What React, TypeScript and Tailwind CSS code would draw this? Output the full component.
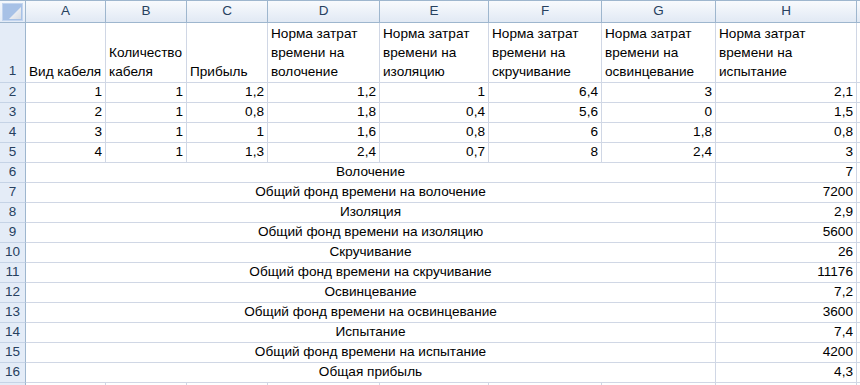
const cols = ["A", "B", "C", "D", "E", "F", "G", "H"];
const widths = ["w-[80px]", "w-[81px]", "w-[81px]", "w-[112px]", "w-[109px]", "w-[113px]", "w-[114px]", "w-[141px]"];

const headers = [
    "Вид кабеля",
    "Количество кабеля",
    "Прибыль",
    "Норма затрат времени на волочение",
    "Норма затрат времени на изоляцию",
    "Норма затрат времени на скручивание",
    "Норма затрат времени на освинцевание",
    "Норма затрат времени на испытание",
];

const data = [
    ["1", "1", "1,2", "1,2", "1", "6,4", "3", "2,1"],
    ["2", "1", "0,8", "1,8", "0,4", "5,6", "0", "1,5"],
    ["3", "1", "1", "1,6", "0,8", "6", "1,8", "0,8"],
    ["4", "1", "1,3", "2,4", "0,7", "8", "2,4", "3"],
];

const totals = [
    ["Волочение", "7"],
    ["Общий фонд времени на волочение", "7200"],
    ["Изоляция", "2,9"],
    ["Общий фонд времени на изоляцию", "5600"],
    ["Скручивание", "26"],
    ["Общий фонд времени на скручивание", "11176"],
    ["Освинцевание", "7,2"],
    ["Общий фонд времени на освинцевание", "3600"],
    ["Испытание", "7,4"],
    ["Общий фонд времени на испытание", "4200"],
    ["Общая прибыль", "4,3"],
];

function RowHead({ n, tall }: { n: number; tall?: boolean }) {
    return (
        <div
            className={`w-[26px] shrink-0 bg-[#e4ecf7] border-r border-b border-r-[#9eb6ce] border-b-[#c5d3e6] text-[#27415f] text-[13.5px] flex justify-center ${
                tall ? "h-[60px] items-end pb-[1px]" : "h-[20px] items-center"
            }`}
        >
            {n}
        </div>
    );
}

export default function App() {
    return (
        <div className="w-[860px] h-[385px] overflow-hidden bg-white font-['Liberation_Sans',Arial,sans-serif] text-[13.6px] text-black">
            <div className="flex h-[23px] border-t border-[#9eb6ce]">
                <div className="w-[26px] shrink-0 p-[2px] pb-[1px] bg-gradient-to-b from-[#f5f8fc] to-[#e4ecf7] border-r border-b border-[#9eb6ce]">
                    <div className="relative w-full h-full bg-[#a7c1e6] border border-[#c3d5ef]">
                        <svg className="absolute right-[1px] bottom-[1px]" width="12" height="12" viewBox="0 0 12 12">
                            <defs>
                                <linearGradient id="tri" x1="0" y1="0" x2="1" y2="1">
                                    <stop offset="0" stopColor="#ffffff" />
                                    <stop offset="1" stopColor="#d6dbe3" />
                                </linearGradient>
                            </defs>
                            <polygon points="12,0 12,12 0,12" fill="url(#tri)" />
                        </svg>
                    </div>
                </div>
                {cols.map((c, i) => (
                    <div
                        key={c}
                        className={`${widths[i]} shrink-0 flex items-center justify-center bg-gradient-to-b from-[#f8fafd] to-[#e1e9f4] border-r border-b border-[#9eb6ce] text-[#27415f] text-[13.5px]`}
                    >
                        {c}
                    </div>
                ))}
                <div className="flex-1 bg-gradient-to-b from-[#f8fafd] to-[#e1e9f4] border-b border-[#9eb6ce]" />
            </div>

            <div className="flex">
                <RowHead n={1} tall />
                {headers.map((h, i) => (
                    <div
                        key={i}
                        className={`${widths[i]} shrink-0 h-[60px] flex items-end px-[3px] pb-[1px] leading-[19px] border-r border-b border-[#d0d7e5]`}
                    >
                        <span>{h}</span>
                    </div>
                ))}
                <div className="flex-1 border-b border-[#d0d7e5]" />
            </div>

            {data.map((r, ri) => (
                <div key={ri} className="flex">
                    <RowHead n={ri + 2} />
                    {r.map((v, i) => (
                        <div
                            key={i}
                            className={`${widths[i]} shrink-0 h-[20px] flex items-center justify-end px-[3px] border-r border-b border-[#d0d7e5]`}
                        >
                            {v}
                        </div>
                    ))}
                    <div className="flex-1 border-b border-[#d0d7e5]" />
                </div>
            ))}

            {totals.map(([label, v], ri) => (
                <div key={ri} className="flex">
                    <RowHead n={ri + 6} />
                    <div className="w-[690px] shrink-0 h-[20px] flex items-center justify-center border-r border-b border-[#d0d7e5]">
                        {label}
                    </div>
                    <div className="w-[141px] shrink-0 h-[20px] flex items-center justify-end px-[3px] border-r border-b border-[#d0d7e5]">
                        {v}
                    </div>
                    <div className="flex-1 border-b border-[#d0d7e5]" />
                </div>
            ))}

            <div className="flex h-[10px]">
                <div className="w-[26px] shrink-0 bg-[#e4ecf7] border-r border-[#9eb6ce]" />
                {widths.map((w, i) => (
                    <div key={i} className={`${w} shrink-0 border-r border-[#d0d7e5]`} />
                ))}
            </div>
        </div>
    );
}
